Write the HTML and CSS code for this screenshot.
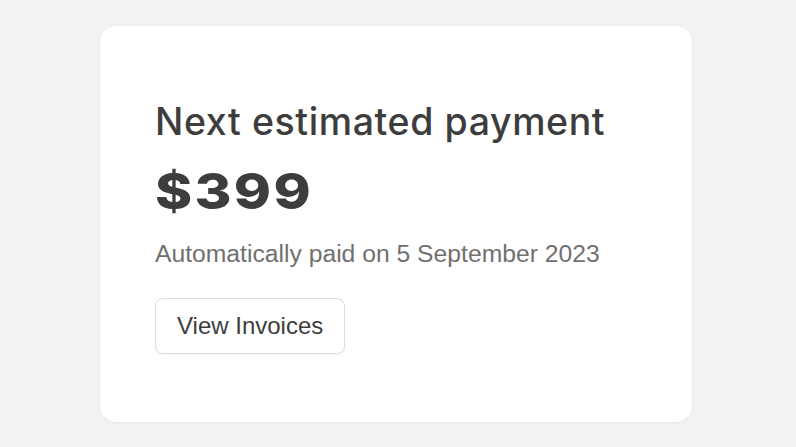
FILE: index.html
```html
<!DOCTYPE html>
<html lang="en">
<head>
    <meta charset="UTF-8">
    <meta name="viewport" content="width=device-width, initial-scale=1.0">
    <title>Next estimated payment</title>
    <link rel="stylesheet" href="styles.css">
</head>
<body>
    <div class="card">
        <h1 class="title">Next estimated payment</h1>
        <p class="amount"><span>$399</span></p>
        <p class="note">Automatically paid on 5 September 2023</p>
        <button class="btn">View Invoices</button>
    </div>
</body>
</html>
```

FILE: styles.css
```css
body {
    background-color: #f3f3f3;
    font-family: "Liberation Sans", Arial, sans-serif;
    margin: 0;
    padding: 26px 0 0 100px;
    height: 447px;
    box-sizing: border-box;
    overflow: hidden;
}
.card {
    background-color: white;
    border-radius: 16px;
    box-shadow: 0 1px 4px rgba(0, 0, 0, 0.06);
    width: 592px;
    height: 396px;
    box-sizing: border-box;
    padding: 73px 55px 0;
}
.title {
    font-family: Inter, sans-serif;
    color: #3d3d3d;
    font-size: 37.5px;
    font-weight: 500;
    letter-spacing: 0.6px;
    line-height: 46px;
    margin: 0;
}
.amount {
    font-family: Inter, sans-serif;
    color: #3d3d3d;
    font-size: 49px;
    font-weight: 800;
    letter-spacing: 2px;
    line-height: 60px;
    margin: 17px 0 0;
}
.amount span {
    display: inline-block;
    transform: scaleX(1.15);
    transform-origin: left center;
}
.note {
    color: #707070;
    font-size: 24.7px;
    line-height: 30px;
    margin: 17px 0 0;
}
.btn {
    display: block;
    margin-top: 29px;
    height: 56px;
    padding: 0 21px;
    background-color: white;
    border: 1.5px solid #dcdcdc;
    border-radius: 8px;
    box-shadow: 0 1px 2px rgba(0, 0, 0, 0.05);
    color: #3d3d3d;
    font-family: "Liberation Sans", Arial, sans-serif;
    font-size: 24px;
}
```
